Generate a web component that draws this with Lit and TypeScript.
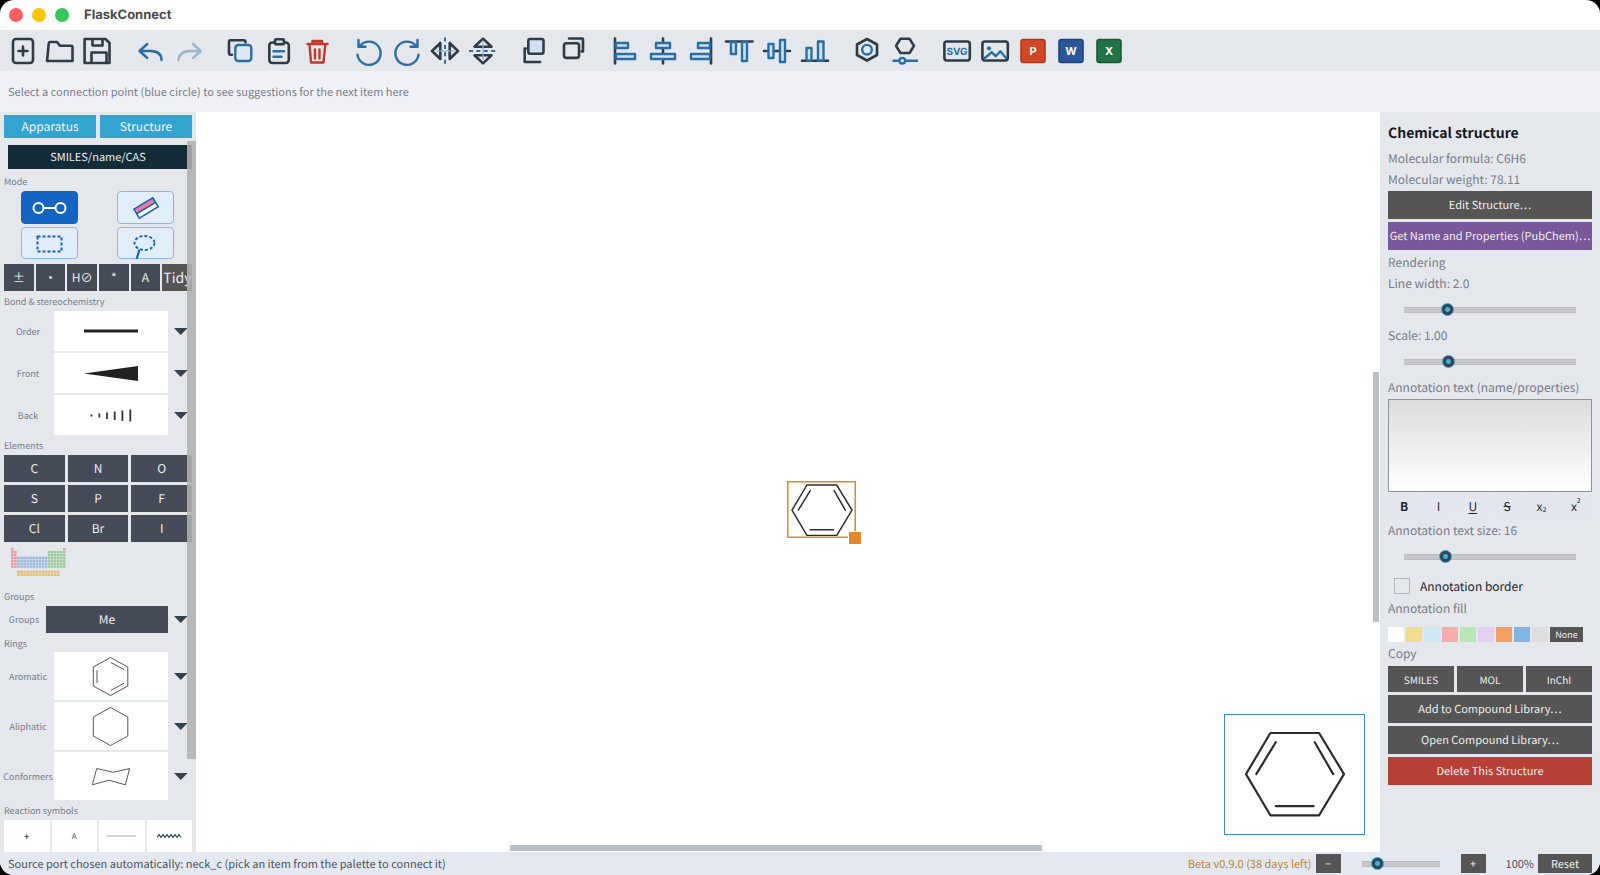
import { LitElement, html, svg, css, TemplateResult } from "lit";
import { customElement, property, state } from "lit/decorators.js";
import { classMap } from "lit/directives/class-map.js";
import { styleMap } from "lit/directives/style-map.js";

/* ---------- toolbar glyphs, drawn on a 38 x 41 grid ---------- */

const bars = (...r: number[][]) =>
  r.map(([x, y, w, h]) => svg`<rect class="b l" x=${x} y=${y} width=${w} height=${h} />`);

const office = (letter: string, fill: string, edge: string) => svg`
  <rect x="7" y="9.5" width="24" height="23" rx="2.5" fill=${fill} stroke=${edge} stroke-width="1.6" />
  <text x="19" y="25.2" class="letter">${letter}</text>`;

const picto: Record<string, TemplateResult> = {
  New: svg`<rect class="d" x="9" y="9" width="20" height="24" rx="3" /><path class="d" d="M19 16.5v9M14.5 21h9" />`,
  Open: svg`<path class="d" d="M5 31L6.8 13.2Q7 12 8.2 12H15l3 3.7H29Q30.5 15.7 30.5 17.2V31Z" />`,
  Save: svg`<path class="d" d="M4.6 9H25.5L29.5 13V33H4.6ZM12.5 9v6.5h10V9M11.5 33V22.5h15V33" />`,
  Undo: svg`<path class="b" d="M15.3 14L7.5 21l7.8 7M8 21H19Q29.5 21.5 29.5 30" />`,
  Redo: svg`<path class="b dim" d="M23 14l7.8 7L23 28M30 21H19.5Q9 21.5 8.5 30" />`,
  Copy: svg`<path class="d" d="M23.5 12.5V12Q23.5 10.3 22 10.3H8.5Q7 10.3 7 12V23Q7 24.7 8.5 24.7H10" />
    <rect class="b l2" x="13.3" y="15" width="16" height="16" rx="3" />`,
  Paste: svg`<rect class="d" x="9.3" y="12.5" width="19.5" height="20.5" rx="3" />
    <rect class="d l" x="15" y="9.3" width="9" height="5" rx="1.6" /><path class="b" d="M13.5 21.3h10.5M13.5 26.7h8" />`,
  Delete: svg`<path class="r" d="M9.5 14H29.5M14.5 13.5V11H24V13.5M11.5 14.5L13 32.5H25.5L27.3 14.5M17 19.5V28.5M21.5 19.5V28.5" />
    <path d="M14.5 11H24V13.5H14.5Z" fill="#c0392b" opacity=".6" />`,
  "Rotate left": svg`<path class="b" d="M7.5 24.8A11.6 11.6 0 1 0 10.6 15.2M8.5 10V16.8H15.5" />`,
  "Rotate right": svg`<path class="b" d="M30.5 24.8A11.6 11.6 0 1 1 27.4 15.2M29.5 10V16.8H22.5" />`,
  "Flip horizontally": svg`<path class="d" d="M14.3 13V29L6 21ZM23.7 13V29L32 21Z" />
    <path class="faint" d="M10 21H28" /><path class="b dash" d="M19 7.5V35" />`,
  "Flip vertically": svg`<path class="d" d="M10.5 16.7H27.5L19 8.6ZM10.5 25.3H27.5L19 33.4Z" />
    <path class="faint" d="M19 12V30" /><path class="b dash" d="M5 21H34" />`,
  "Bring to front": svg`<path class="d" d="M9.8 18.5H8.7V32H24" /><rect class="d l" x="12.3" y="9" width="15.2" height="14.8" rx="2" />`,
  "Send to back": svg`<path d="M18 9.5H29V20Z" fill="#cfe2f2" /><path class="d" d="M15 8.5H28Q29 8.5 29 9.5V21.5H27.5" />
    <rect class="d" x="10" y="13.3" width="15" height="14.6" rx="2.4" />`,
  "Align left": svg`<path class="d" d="M9 8.5V33.5" />${bars([10, 13, 12, 5], [10, 24, 19, 5])}`,
  "Align centre": svg`<path class="d" d="M19 8.5V33.5" />${bars([12, 13, 14, 5], [7, 24, 24, 5])}`,
  "Align right": svg`<path class="d" d="M29 8.5V33.5" />${bars([16, 13, 12, 5], [9, 24, 19, 5])}`,
  "Align top": svg`<path class="d" d="M6 11.5H32.5" />${bars([11, 12, 5, 12], [22, 12, 5, 19])}`,
  "Align middle": svg`<path class="d" d="M6 21H32" />${bars([10.5, 14, 5, 14], [22, 10, 5, 22])}`,
  "Align bottom": svg`<path class="d" d="M6 30.7H32" />${bars([10.5, 18, 5, 12.5], [22, 11.5, 5.5, 19])}`,
  "Structure settings": svg`<path class="d" d="M19 9L29 14.5V25L19 30.5L9 25V14.5Z" /><circle class="b l2" cx="19" cy="19.7" r="4.8" />`,
  "Bond length": svg`<path class="d" d="M14.5 8.7H23.5L28 15.9L23.5 23H14.5L10 15.9Z" /><path class="b" d="M7.5 30.7H31" /><circle class="b l2" cx="16.3" cy="30.7" r="2.8" />`,
  "Export SVG": svg`<rect class="d" x="6.4" y="11.5" width="25.4" height="19" rx="2.4" /><text x="19" y="25.2" class="svgword">SVG</text>`,
  "Export image": svg`<rect class="d" x="6.4" y="11.5" width="25.4" height="19" rx="2.4" />
    <circle cx="13" cy="18.3" r="2.1" fill="#2a6ea6" /><path class="b" d="M8.8 28L15.8 22.3L19.7 26.2L24.3 21.3L30 28" />`,
  "Export to PowerPoint": office("P", "#d24726", "#b0381b"),
  "Export to Word": office("W", "#2b579a", "#1f4280"),
  "Export to Excel": office("X", "#217346", "#175a35"),
};

const toolGroups = [
  ["New", "Open", "Save"],
  ["Undo", "Redo"],
  ["Copy", "Paste", "Delete"],
  ["Rotate left", "Rotate right", "Flip horizontally", "Flip vertically"],
  ["Bring to front", "Send to back"],
  ["Align left", "Align centre", "Align right", "Align top", "Align middle", "Align bottom"],
  ["Structure settings", "Bond length"],
  ["Export SVG", "Export image", "Export to PowerPoint", "Export to Word", "Export to Excel"],
];

const shared = css`
  * { box-sizing: border-box; }
  button, input, textarea { font: inherit; color: inherit; margin: 0; text-rendering: inherit; }
  button { border: 0; padding: 0; background: none; cursor: pointer; display: flex; align-items: center; justify-content: center; white-space: nowrap; }
  svg { display: block; }
  input[type="range"] {
    appearance: none; -webkit-appearance: none; background: none; height: 14px; display: block;
  }
  input[type="range"]::-webkit-slider-runnable-track {
    height: 6px; background: #c5c7ca; border-top: 1px solid #b9bbbe; border-bottom: 1px solid #bbbdc0;
  }
  input[type="range"]::-webkit-slider-thumb {
    -webkit-appearance: none; width: 13px; height: 13px; margin-top: -5px; border-radius: 50%;
    background: radial-gradient(circle, #35b4e0 0 2px, #36454f 3px); border: 1px solid #2ba0cb;
  }
`;

@customElement("tool-bar")
class ToolBar extends LitElement {
  static styles = [shared, css`
    :host { display: flex; gap: 14px; padding-left: 4px; background: #e4e7ec; flex: none; }
    .group { display: flex; }
    .tool { width: 38px; height: 41px; }
    .d, .b, .r { fill: none; stroke: #2f3c48; stroke-width: 2.6; stroke-linecap: round; stroke-linejoin: round; }
    .b { stroke: #2a6ea6; stroke-width: 2.4; }
    .r { stroke: #c0392b; stroke-width: 2.4; }
    .dim { stroke: #9bb6cd; }
    .l { fill: #cfe2f2; }
    .l2 { fill: #dfe9f3; }
    .dash { stroke-dasharray: 4 3.4; stroke-width: 2; stroke-linecap: butt; }
    .faint { stroke: #86b2d6; stroke-width: 1.2; fill: none; }
    .letter { font: 700 11px Inter, sans-serif; fill: #fff; text-anchor: middle; }
    .svgword { font: 700 10px Inter, sans-serif; fill: #2a6ea6; text-anchor: middle; }
  `];
  render() {
    return toolGroups.map((g) => html`<div class="group">${g.map((name) => html`
      <button class="tool" aria-label=${name}><svg width="38" height="41" viewBox="0 0 38 41">${picto[name]}</svg></button>`)}</div>`);
  }
}

@customElement("benzene-ring")
class BenzeneRing extends LitElement {
  @property({ type: Number }) width = 60;
  @property({ type: Number }) stroke = 4;
  static styles = css`
    :host { display: block; }
    svg { display: block; overflow: visible; }
    path { fill: none; stroke: #2c2c2c; stroke-linecap: round; stroke-linejoin: round; }
  `;
  render() {
    return html`<svg width=${this.width} viewBox="0 0 181 152">
      <path stroke-width=${this.stroke} d="M45 0H135L181 76L135 152H45L0 76ZM55 17L19 76M127 17L161 76M55 135H125" /></svg>`;
  }
}

/* ---------- palette ---------- */

const hexagon = "M56.5 5.5L73.8 15V34L56.5 43.5L39.3 34V15Z";

const choices = {
  bonds: [
    ["Order", svg`<path d="M30 20H84" stroke="#222" stroke-width="3" />`],
    ["Front", svg`<path d="M30 20.5L84 13V28Z" fill="#222" />`],
    ["Back", svg`<path d="M37.5 19.5v2M45.3 18.5v4M53 17.5v6.5M60.7 16.5v8.5M68.4 15.5v10.5M76.3 14.5v12" stroke="#333" stroke-width="1.8" />`],
  ],
  rings: [
    ["Aromatic", svg`<path class="ring" d="${hexagon}M57 10.5L70 17.6M70 31.2L57 38.4M43 18V31" />`],
    ["Aliphatic", svg`<path class="ring" d=${hexagon} />`],
    ["Conformers", svg`<path class="ring" d="M42.7 16.5L59.3 20.3L75.7 16.5L71.3 32.8L55 28.2L38.3 32.8Z" />`],
  ],
} as const;

function periodicCells() {
  const out: TemplateResult[] = [];
  const cell = (c: number, r: number, fill: string) =>
    out.push(svg`<rect x=${c * 3.06} y=${r * 2.9} width="2.6" height="2.4" fill=${fill} />`);
  for (let r = 0; r < 7; r++)
    for (let c = 0; c < 18; c++) {
      if (c === 0 || (c === 1 && r > 0)) cell(c, r, "#e79a9d");
      else if (c === 17 && r === 0) cell(c, r, "#e79a9d");
      else if (c > 1 && c < 12 && r > 2) cell(c, r, "#9dbbe0");
      else if (c > 11 && r > 0) cell(c, r, "#9ccb98");
    }
  for (let r = 0; r < 2; r++) for (let c = 2; c < 16; c++) cell(c, r + 7.8, "#e3c077");
  return out;
}

@customElement("item-palette")
class ItemPalette extends LitElement {
  @state() mode = 0;
  static styles = [shared, css`
    :host { display: flex; flex-direction: column; width: 196px; flex: none; background: #e4e7ec; position: relative; overflow: hidden; padding: 3px 4px 0; }
    .tabs { display: grid; grid-template-columns: 1fr 1fr; gap: 4px; flex: none; }
    .tab { height: 23px; background: #33a3cf; color: #eef8fc; font-size: 12px; }
    .smiles { height: 24px; flex: none; margin: 7px 0 2px 4px; padding-right: 4px; background: #142b38; color: #e8edf0; font-size: 11px; }
    .caption { height: 20px; line-height: 22px; font-size: 9px; color: #757d8c; flex: none; }
    .modes { display: grid; grid-template-columns: 1fr 1fr; gap: 3px 4px; justify-items: center; padding: 0 1px 5px 0; flex: none; }
    .mode { width: 57px; height: 33px; border-radius: 4px; border: 1px solid #8fb3e3; background: #e2edfa; }
    .mode.on { background: #1464c4; border-color: #1464c4; }
    .mode + .mode + .mode { height: 32px; }
    .tools { display: grid; grid-template-columns: repeat(6, minmax(0, 1fr)); gap: 2px; flex: none; }
    .key { height: 27px; background: #464c57; color: #eceef1; font-size: 12px; overflow: hidden; }
    .tidy { background: #555; font-size: 14px; justify-content: flex-start; padding-left: 1px; }
    .rows { display: grid; gap: 2px; flex: none; }
    .row { display: grid; grid-template-columns: 48px 114px 1fr; column-gap: 2px; align-items: center; }
    .row.wide { grid-template-columns: 40px 122px 1fr; flex: none; }
    .name { font-size: 9px; color: #757d8c; text-align: center; white-space: nowrap; display: flex; justify-content: center; }
    .pic { background: #fff; }
    .more { height: 27px; }
    .ring { fill: none; stroke: #555; stroke-width: 1; }
    .elements { display: grid; grid-template-columns: repeat(3, 1fr); gap: 3px; flex: none; }
    .table { height: 44px; flex: none; padding: 6px 7px 0; align-items: flex-start; justify-content: flex-start; }
    .rings { height: 19px; }
    .symbols { display: grid; grid-template-columns: repeat(4, 1fr); gap: 2px; flex: none; }
    .symbol { height: 32px; background: #fff; color: #34495e; font-size: 8px; }
    .bold { font-weight: 700; font-size: 9px; }
    .thumb { position: absolute; right: 0; top: 29px; width: 9px; height: 83.5%; background: rgba(178, 178, 178, 0.88); }
  `];

  private modeIcons = [
    ["Draw bonds", svg`<path d="M22 16H35M22 16a5 5 0 1 1-10 0a5 5 0 1 1 10 0ZM34 16a5 5 0 1 0 10 0a5 5 0 1 0-10 0Z" fill="none" stroke="#fff" stroke-width="2" />`],
    ["Erase", svg`<g transform="rotate(-31 28 16)"><rect x="17.5" y="11" width="22" height="10.5" fill="#fff" /><rect x="17.5" y="11" width="22" height="5.5" fill="#f27a9b" /><path d="M17.5 11h22v10.5h-22ZM17.5 16.4h22" fill="none" stroke="#1464c4" stroke-width="1.6" /></g>`],
    ["Rectangle select", svg`<rect x="16" y="8.5" width="24" height="15" fill="none" stroke="#1464c4" stroke-width="2" stroke-dasharray="3 2" />`],
    ["Lasso select", svg`<ellipse cx="27" cy="15" rx="10" ry="7" fill="none" stroke="#1464c4" stroke-width="1.9" stroke-dasharray="3 2" /><path d="M22 21.5L19 31.5" stroke="#1464c4" stroke-width="2.2" />`],
  ] as const;

  private arrow(name: string) {
    return html`<button class="more" aria-label="More: ${name}"><svg width="14" height="7"><path d="M0 0H13.6L6.8 7Z" fill="#33424f" /></svg></button>`;
  }
  private rows(list: readonly (readonly [string, TemplateResult])[], h: number) {
    return html`<div class="rows">${list.map(([name, art]) => html`<div class="row">
      <span class="name">${name}</span>
      <button class="pic" aria-label=${name}><svg width="114" height=${h}>${art}</svg></button>
      ${this.arrow(name)}</div>`)}</div>`;
  }
  render() {
    return html`
      <div class="tabs"><button class="tab">Apparatus</button><button class="tab">Structure</button></div>
      <button class="smiles">SMILES/name/CAS</button>
      <div class="caption">Mode</div>
      <div class="modes">${this.modeIcons.map(([name, art], i) => html`
        <button class=${classMap({ mode: true, on: i === this.mode })} aria-label=${name} @click=${() => (this.mode = i)}>
          <svg width="55" height="31" viewBox="0.5 0 55 31">${art}</svg></button>`)}</div>
      <div class="tools">
        ${["±", "•", "H⊘", "*", "A"].map((t) => html`<button class="key">${t}</button>`)}
        <button class="key tidy">Tidy</button>
      </div>
      <div class="caption">Bond &amp; stereochemistry</div>
      ${this.rows(choices.bonds, 40)}
      <div class="caption">Elements</div>
      <div class="elements">${["C", "N", "O", "S", "P", "F", "Cl", "Br", "I"].map((t) => html`<button class="key">${t}</button>`)}</div>
      <button class="table" aria-label="Periodic table"><svg width="56" height="30">${periodicCells()}</svg></button>
      <div class="caption">Groups</div>
      <div class="row wide"><span class="name">Groups</span><button class="key">Me</button>${this.arrow("Groups")}</div>
      <div class="caption rings">Rings</div>
      ${this.rows(choices.rings, 48)}
      <div class="caption">Reaction symbols</div>
      <div class="symbols">
        <button class="symbol bold">+</button>
        <button class="symbol">A</button>
        <button class="symbol" aria-label="Line"><svg width="29" height="2"><path d="M0 1H29" stroke="#a8adb3" /></svg></button>
        <button class="symbol" aria-label="Wavy line"><svg width="25" height="6"><path d="M0 4.5l2-3 2 3 2-3 2 3 2-3 2 3 2-3 2 3 2-3 2 3 2-3 2 3" fill="none" stroke="#34495e" stroke-width="1.2" /></svg></button>
      </div>
      <div class="thumb"></div>`;
  }
}

/* ---------- properties ---------- */

const fills = ["#ffffff", "#f0dc8c", "#cfe8f5", "#f7adad", "#b7e6b7", "#e5cff0", "#f1a060", "#7fb6e6", "#dedede"];

@customElement("structure-panel")
class StructurePanel extends LitElement {
  static styles = [shared, css`
    :host { display: block; width: 220px; flex: none; background: #e4e7ec; padding: 12px 8px 0; overflow: hidden; color: #757c8b; font-size: 12px; }
    .title { margin: 0 0 4px; height: 21px; font-size: 14px; line-height: 19px; font-weight: 700; color: #14181f; }
    .line { display: block; height: 21px; line-height: 20px; white-space: nowrap; }
    .stack { display: grid; grid-template-columns: minmax(0, 1fr); gap: 3px; }
    .gap { margin-bottom: 3px; }
    .btn { height: 28px; background: #555; color: #eee; font-size: 11px; }
    .violet { background: #785899; }
    .danger { background: #b74036; }
    .slide { height: 31px; display: flex; align-items: center; padding: 0 16px 2px; }
    .slide input { flex: 1; min-width: 0; }
    .note { display: block; width: 100%; height: 93px; resize: none; border: 1px solid #8f9296; background: linear-gradient(#dcdcdc, #fff); }
    .format { display: grid; grid-template-columns: repeat(6, 1fr); gap: 2px; margin: 2px 0; }
    .fmt { height: 25px; background: #e3e6ee; color: #20262e; font-size: 12px; }
    .b { font-weight: 700; }
    .u { text-decoration: underline; text-underline-offset: 2px; }
    .s { text-decoration: line-through; }
    .script { font-size: 7px; line-height: 7px; }
    .sub { padding-top: 8px; }
    .sup { padding-bottom: 10px; }
    .check { display: flex; align-items: center; gap: 10px; height: 26px; padding-left: 6px; color: #20262e; }
    .box { appearance: none; -webkit-appearance: none; width: 16px; height: 16px; border: 1px solid #b3b8be; }
    .swatches { display: flex; gap: 2px; padding: 7px 0 2px; }
    .swatch { width: 16px; height: 15px; }
    .none { width: 33px; height: 15px; background: #555; color: #eee; font-size: 9px; }
    .copy { display: grid; grid-template-columns: repeat(3, 1fr); gap: 3px; padding-top: 1px; }
    .small { height: 26px; font-size: 10px; }
  `];
  private slider(id: string, text: string, value: number) {
    return html`<label class="line" for=${id}>${text}</label>
      <div class="slide"><input id=${id} type="range" min="0" max="100" .value=${String(value)} /></div>`;
  }
  render() {
    return html`
      <h2 class="title">Chemical structure</h2>
      <div class="line">Molecular formula: C6H6</div>
      <div class="line">Molecular weight: 78.11</div>
      <div class="stack gap">
        <button class="btn">Edit Structure…</button>
        <button class="btn violet">Get Name and Properties (PubChem)…</button>
      </div>
      <div class="line">Rendering</div>
      ${this.slider("lw", "Line width: 2.0", 23)}
      ${this.slider("sc", "Scale: 1.00", 24)}
      <label class="line" for="note">Annotation text (name/properties)</label>
      <textarea class="note" id="note"></textarea>
      <div class="format">
        <button class="fmt b">B</button><button class="fmt">I</button><button class="fmt u">U</button><button class="fmt s">S</button>
        <button class="fmt">x<span class="script sub">2</span></button><button class="fmt">x<span class="script sup">2</span></button>
      </div>
      ${this.slider("ts", "Annotation text size: 16", 22)}
      <div class="check"><input class="box" id="bd" type="checkbox" /><label for="bd">Annotation border</label></div>
      <div class="line">Annotation fill</div>
      <div class="swatches">
        ${fills.map((f) => html`<button class="swatch" aria-label="Fill ${f}" style=${styleMap({ background: f })}></button>`)}
        <button class="none">None</button>
      </div>
      <div class="line">Copy</div>
      <div class="stack">
        <div class="copy">${["SMILES", "MOL", "InChI"].map((t) => html`<button class="btn small">${t}</button>`)}</div>
        <button class="btn">Add to Compound Library…</button>
        <button class="btn">Open Compound Library…</button>
        <button class="btn danger">Delete This Structure</button>
      </div>`;
  }
}

@customElement("app-root")
class AppRoot extends LitElement {
  static styles = [shared, css`
    :host { display: block; background: #000; font-family: "Noto Sans CJK SC", "Noto Sans", sans-serif; text-rendering: geometricPrecision; }
    .window { height: 100vh; display: flex; flex-direction: column; border-radius: 14px; overflow: hidden; background: #fff; }
    .titlebar { height: 30px; flex: none; display: flex; align-items: center; gap: 9px; padding-left: 9px; }
    .light { width: 14px; height: 14px; border-radius: 50%; }
    .red { background: #ff5f5e; }
    .amber { background: #fbc500; }
    .green { background: #34c759; }
    .app { margin: 0 0 0 6px; font: 700 13px/30px Inter, sans-serif; color: #4a4a4a; }
    .hint { height: 41px; line-height: 42px; flex: none; background: #f0f1f6; padding-left: 8px; font-size: 11px; color: #757d8c; }
    .main { flex: 1; min-height: 0; display: flex; }
    .canvas { flex: 1; min-width: 0; background: #fff; position: relative; overflow: hidden; }
    .selected { position: absolute; left: 591px; top: 369px; width: 69px; height: 57px; border: 1px solid #e0892b; outline: 1px solid #f0c08a; outline-offset: -2px; padding: 3px 4px; }
    .handle { position: absolute; right: -7px; bottom: -8px; width: 14px; height: 14px; background: #e0892b; border: 1px solid #fff; }
    .preview { position: absolute; right: 15px; bottom: 17px; width: 141px; height: 121px; border: 1px solid #3f86e0; background: #fff; display: grid; place-items: center; }
    .vbar { position: absolute; right: 1px; top: 260px; width: 6px; height: 33.8%; background: #b9bfc7; }
    .hbar { position: absolute; bottom: 1px; left: 314px; width: 44.9%; height: 6px; background: #b9bfc7; }
    .status { height: 23px; flex: none; display: flex; align-items: center; background: #e4e8f0; padding: 0 8px; font-size: 11px; color: #4a5260; }
    .message { flex: 1; }
    .beta { color: #bd862b; margin-right: 4px; }
    .sq { height: 19px; width: 25px; background: #555; color: #eee; }
    .zoom { width: 78px; margin: 0 21px; }
    .pct { margin: 0 4px 0 20px; }
    .reset { width: 54px; height: 19px; background: #555; color: #eee; }
  `];
  render() {
    return html`<div class="window">
      <header class="titlebar"><span class="light red"></span><span class="light amber"></span><span class="light green"></span>
        <h1 class="app">FlaskConnect</h1></header>
      <tool-bar></tool-bar>
      <div class="hint">Select a connection point (blue circle) to see suggestions for the next item here</div>
      <div class="main">
        <item-palette></item-palette>
        <div class="canvas">
          <div class="selected"><benzene-ring .width=${60} .stroke=${4.4}></benzene-ring><span class="handle"></span></div>
          <div class="preview"><benzene-ring .width=${98} .stroke=${4}></benzene-ring></div>
          <div class="vbar"></div><div class="hbar"></div>
        </div>
        <structure-panel></structure-panel>
      </div>
      <footer class="status">
        <span class="message">Source port chosen automatically: neck_c (pick an item from the palette to connect it)</span>
        <span class="beta">Beta v0.9.0 (38 days left)</span>
        <button class="sq" aria-label="Zoom out">−</button>
        <input class="zoom" type="range" min="0" max="100" value="14" aria-label="Zoom" />
        <button class="sq" aria-label="Zoom in">+</button>
        <span class="pct">100%</span>
        <button class="reset">Reset</button>
      </footer>
    </div>`;
  }
}
